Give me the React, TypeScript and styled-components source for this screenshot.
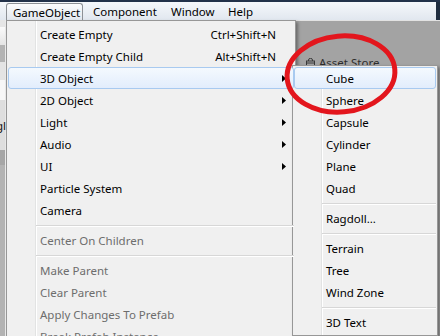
import React from 'react';
import styled, { createGlobalStyle, css } from 'styled-components';

const Global = createGlobalStyle`
  html, body { margin: 0; padding: 0; }
  body {
    width: 440px; height: 336px; overflow: hidden; background: #a3a3a3;
    font-family: "Noto Sans", "Segoe UI", "Liberation Sans", sans-serif;
  }
`;

const Screen = styled.div`
  position: relative;
  width: 440px;
  height: 336px;
  overflow: hidden;
  display: flex;
  flex-direction: column;
`;

const TitleEdge = styled.div`
  height: 2px;
  flex: none;
  background: #22324a;
`;

const BarRow = styled.div`
  display: flex;
  height: 18px;
  flex: none;
`;

const MenuBar = styled.nav`
  flex: 1;
  display: flex;
  align-items: stretch;
  padding-left: 6px;
  background: linear-gradient(#f5f8fb, #e1e7ef);
`;

const BarEnd = styled.div`
  width: 4px;
  background: #1f2d40;
`;

const BarItem = styled.div<{ $w?: number; $pl: number; $active?: boolean }>`
  box-sizing: border-box;
  ${p => (p.$w ? `width: ${p.$w}px;` : '')}
  padding-left: ${p => p.$pl}px;
  display: flex;
  align-items: center;
  font-size: 11.5px;
  color: #000;
  white-space: nowrap;
  ${p =>
    p.$active &&
    css`
      margin-top: 1px;
      border: 1px solid #8d9196;
      border-bottom: none;
      border-radius: 3px 3px 0 0;
      background: linear-gradient(#fbfcfd, #e2e7ee);
    `}
`;

const Workspace = styled.div`
  flex: 1;
  display: flex;
  min-height: 0;
`;

const LeftStrip = styled.div`
  width: 6px;
  flex: none;
  display: flex;
  flex-direction: column;
  overflow: hidden;
`;

const StripBlock = styled.div<{ $h?: number; $bg: string }>`
  flex: ${p => (p.$h ? `0 0 ${p.$h}px` : '1')};
  background: ${p => p.$bg};
  box-shadow: inset -1px 0 0 #ececec;
  display: flex;
  align-items: center;
  justify-content: flex-end;
  overflow: hidden;
  font-size: 11.5px;
  color: #111;
`;

const Hidden = styled.div`
  width: 290px;
  flex: none;
  background: #e4e4e4;
`;

const RightPane = styled.div`
  flex: 1;
  background: #a3a3a3;
  border-top: 1px solid #e2e2e2;
  padding: 33px 0 0 10px;
`;

const AssetTab = styled.div`
  display: flex;
  align-items: center;
  gap: 4px;
  height: 16px;
  font-size: 11.5px;
  color: #2d2d2d;
  white-space: nowrap;
`;

const MenuPanel = styled.div<{ $left: number; $top: number; $width: number; $pt: number }>`
  position: absolute;
  left: ${p => p.$left}px;
  top: ${p => p.$top}px;
  width: ${p => p.$width}px;
  box-sizing: border-box;
  border: 1px solid #979797;
  background: #f0f0f0;
  padding: ${p => p.$pt}px 0 2px;
  box-shadow: 2px 2px 3px rgba(0, 0, 0, 0.35);
  font-size: 11.5px;
  &::before {
    content: '';
    position: absolute;
    left: 28px;
    top: 0;
    bottom: 0;
    width: 1px;
    background: #e2e3e3;
    box-shadow: 1px 0 0 #ffffff;
  }
`;

const Item = styled.div<{ $hl?: boolean; $disabled?: boolean }>`
  position: relative;
  z-index: 1;
  height: 22px;
  box-sizing: border-box;
  margin: 0 1px;
  padding: 0 7px 0 31px;
  display: flex;
  align-items: center;
  border: 1px solid transparent;
  border-radius: 3px;
  white-space: nowrap;
  color: ${p => (p.$disabled ? '#6d6d6d' : '#000')};
  ${p =>
    p.$hl &&
    css`
      border-color: #a8caf0;
      background: linear-gradient(#f4f9fe, #e2edfc);
    `}
`;

const Label = styled.span`
  flex: 1;
`;

const Shortcut = styled.span`
  color: inherit;
`;

const ArrowSlot = styled.span`
  width: 10px;
  display: flex;
  justify-content: flex-end;
  align-items: center;
`;

const Separator = styled.div`
  position: relative;
  z-index: 1;
  height: 0;
  margin: 4px 1px 2px 29px;
  border-top: 1px solid #d7d7d7;
  border-bottom: 1px solid #ffffff;
`;

const Overlay = styled.svg`
  position: absolute;
  left: 0;
  top: 0;
  pointer-events: none;
  z-index: 10;
`;

const Arrow = () => (
  <svg width="4" height="7" viewBox="0 0 4 7">
    <polygon points="0,0 4,3.5 0,7" fill="#000" />
  </svg>
);

const Bag = () => (
  <svg width="9" height="9" viewBox="0 0 9 9">
    <path d="M2.5 3 V2 a2 1.6 0 0 1 4 0 V3" fill="none" stroke="#3a3a3a" strokeWidth="1" />
    <rect x="0.5" y="3" width="8" height="5.5" fill="none" stroke="#3a3a3a" strokeWidth="1" />
    <line x1="0.5" y1="5" x2="8.5" y2="5" stroke="#3a3a3a" strokeWidth="1" />
  </svg>
);

type Entry =
  | { sep: true }
  | { label: string; shortcut?: string; sub?: boolean; hl?: boolean; disabled?: boolean };

const mainEntries: Entry[] = [
  { label: 'Create Empty', shortcut: 'Ctrl+Shift+N' },
  { label: 'Create Empty Child', shortcut: 'Alt+Shift+N' },
  { label: '3D Object', sub: true, hl: true },
  { label: '2D Object', sub: true },
  { label: 'Light', sub: true },
  { label: 'Audio', sub: true },
  { label: 'UI', sub: true },
  { label: 'Particle System' },
  { label: 'Camera' },
  { sep: true },
  { label: 'Center On Children', disabled: true },
  { sep: true },
  { label: 'Make Parent', disabled: true },
  { label: 'Clear Parent', disabled: true },
  { label: 'Apply Changes To Prefab', disabled: true },
  { label: 'Break Prefab Instance', disabled: true },
];

const subEntries: Entry[] = [
  { label: 'Cube', hl: true },
  { label: 'Sphere' },
  { label: 'Capsule' },
  { label: 'Cylinder' },
  { label: 'Plane' },
  { label: 'Quad' },
  { sep: true },
  { label: 'Ragdoll...' },
  { sep: true },
  { label: 'Terrain' },
  { label: 'Tree' },
  { label: 'Wind Zone' },
  { sep: true },
  { label: '3D Text' },
];

const renderEntries = (entries: Entry[]) =>
  entries.map((e, i) =>
    'sep' in e ? (
      <Separator key={i} />
    ) : (
      <Item key={i} $hl={e.hl} $disabled={e.disabled}>
        <Label>{e.label}</Label>
        {e.shortcut && <Shortcut>{e.shortcut}</Shortcut>}
        <ArrowSlot>{e.sub && <Arrow />}</ArrowSlot>
      </Item>
    )
  );

export default function App() {
  return (
    <>
      <Global />
      <Screen>
        <TitleEdge />
        <BarRow>
          <MenuBar>
            <BarItem $w={77} $pl={6} $active>GameObject</BarItem>
            <BarItem $w={79} $pl={10}>Component</BarItem>
            <BarItem $w={58} $pl={9}>Window</BarItem>
            <BarItem $pl={8}>Help</BarItem>
          </MenuBar>
          <BarEnd />
        </BarRow>
        <Workspace>
          <LeftStrip>
            <StripBlock $h={7} $bg="#e6e6e6" />
            <StripBlock $h={18} $bg="linear-gradient(#fbfbfb, #e4e4e4)" />
            <StripBlock $h={17} $bg="#b3b3b3" />
            <StripBlock $h={18} $bg="#e4e4e4" />
            <StripBlock $h={20} $bg="#f7f7f7" />
            <StripBlock $h={50} $bg="#dedede">gl</StripBlock>
            <StripBlock $h={15} $bg="#a6a6a6" />
            <StripBlock $bg="#b3b3b3" />
          </LeftStrip>
          <Hidden />
          <RightPane>
            <AssetTab>
              <Bag />
              <span>Asset Store</span>
            </AssetTab>
          </RightPane>
        </Workspace>

        <MenuPanel $left={6} $top={20} $width={290} $pt={2}>
          {renderEntries(mainEntries)}
        </MenuPanel>
        <MenuPanel $left={292} $top={65} $width={146} $pt={1}>
          {renderEntries(subEntries)}
        </MenuPanel>

        <Overlay width="440" height="336" viewBox="0 0 440 336">
          <ellipse
            cx="341"
            cy="74"
            rx="54"
            ry="38"
            transform="rotate(-5 341 74)"
            fill="none"
            stroke="#e3161d"
            strokeWidth="5"
          />
        </Overlay>
      </Screen>
    </>
  );
}
